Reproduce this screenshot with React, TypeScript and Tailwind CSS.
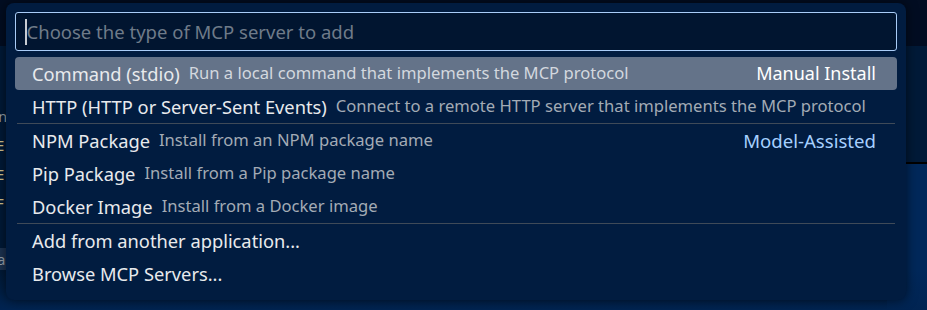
import React from "react";

type Item = {
  label: string;
  desc?: string;
  tag?: string;
  sep?: boolean;
  selected?: boolean;
};

const items: Item[] = [
  {
    label: "Command (stdio)",
    desc: "Run a local command that implements the MCP protocol",
    tag: "Manual Install",
    selected: true,
  },
  {
    label: "HTTP (HTTP or Server-Sent Events)",
    desc: "Connect to a remote HTTP server that implements the MCP protocol",
  },
  {
    label: "NPM Package",
    desc: "Install from an NPM package name",
    tag: "Model-Assisted",
    sep: true,
  },
  { label: "Pip Package", desc: "Install from a Pip package name" },
  { label: "Docker Image", desc: "Install from a Docker image" },
  { label: "Add from another application...", sep: true },
  { label: "Browse MCP Servers..." },
];

export default function App() {
  return (
    <div
      className="relative h-[310px] w-[927px] overflow-hidden bg-[#011a38]"
      style={{ fontFamily: '"Segoe UI", "Noto Sans", sans-serif' }}
    >
      {/* editor behind the quick pick */}
      <div className="absolute inset-x-0 top-0 h-[46px] bg-[#020d22]" />
      <div className="absolute right-0 top-[162px] h-[148px] w-[40px] border-t-2 border-black bg-[#01285a]" />
      <div className="absolute inset-x-0 bottom-0 h-[40px] bg-gradient-to-b from-transparent to-[#012452]" />
      <div className="absolute left-0 top-[108px] flex flex-col gap-[13px] text-[15px] leading-[16px] text-[#d8c58e]">
        <span className="-ml-[2px] text-[#9aa3ad]">n</span>
        <span className="-ml-[4px]">E</span>
        <span className="-ml-[4px]">E</span>
        <span className="-ml-[4px]">F</span>
      </div>
      <div className="absolute left-0 top-[248px] h-[22px] w-[6px] bg-[#1c3352] text-[15px] leading-[22px] text-[#9aa3ad]">
        <span className="-ml-[3px]">a</span>
      </div>

      {/* quick pick */}
      <div className="absolute left-[6px] top-[3px] h-[297px] w-[900px] rounded-lg bg-[#011c40] px-[9px] pt-[9px] shadow-[0_0_12px_rgba(0,0,0,0.6)]">
        <div className="flex h-[39px] items-center rounded-[3px] border border-[#a9ccf7] bg-[#011530] pl-[9px]">
          <span className="h-[26px] w-[1.5px] bg-[#c8ccd2]" />
          <span className="text-[18.5px] text-[#6f7b89]">Choose the type of MCP server to add</span>
        </div>
        <div className="mt-[6px] flex flex-col">
          {items.map((it) => (
            <div
              key={it.label}
              className={
                it.sep ? "mx-[2px] border-t border-[#3f4a58]" : "mx-[2px]"
              }
            >
              <div
                className={
                  "-mx-[2px] flex h-[33px] items-center rounded-[4px] pl-[17px] pr-[21px] " +
                  (it.selected ? "bg-[#647389]" : "")
                }
              >
                <span className="whitespace-nowrap text-[18.3px] text-[#e8eaed]">{it.label}</span>
                {it.desc && (
                  <span
                    className={
                      "ml-[9px] whitespace-nowrap text-[16.6px] " +
                      (it.selected ? "text-[#d3d8df]" : "text-[#a3abb5]")
                    }
                  >
                    {it.desc}
                  </span>
                )}
                {it.tag && (
                  <span
                    className={
                      "ml-auto whitespace-nowrap " +
                      (it.selected ? "text-[18px] text-white" : "text-[18.6px] text-[#a6d0ff]")
                    }
                  >
                    {it.tag}
                  </span>
                )}
              </div>
            </div>
          ))}
        </div>
      </div>
    </div>
  );
}
